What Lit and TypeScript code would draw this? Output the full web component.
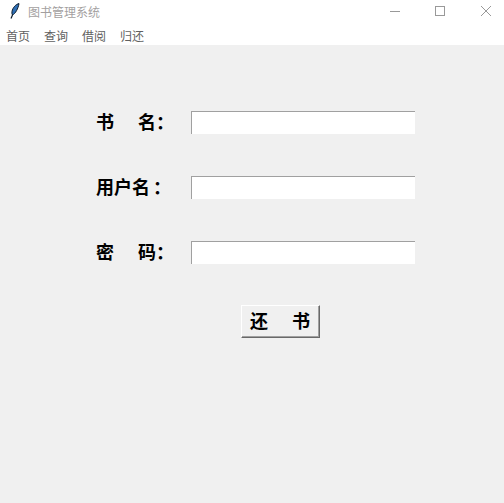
import { LitElement, html, css } from "lit";
import { customElement } from "lit/decorators.js";

@customElement("app-root")
export class AppRoot extends LitElement {
  static styles = css`
    :host { display: flex; flex-direction: column; width: 504px; height: 503px; background: #f0f0f0; overflow: hidden;
      font-family: "Noto Sans CJK SC", sans-serif; }
    .titlebar { height: 23px; background: #fff; display: flex; align-items: flex-start; padding-right: 12px; }
    .logo { width: 10px; height: 16px; margin: 3px 0 0 10px; flex: none; }
    .title { margin-left: 8px; font-size: 12px; line-height: 23px; color: #a39f9f; flex: 1; }
    .win { width: 12px; height: 12px; margin: 5px 0 0 33px; flex: none; display: block; }
    .win.close { margin-left: 34px; }
    .menu { height: 22px; background: #fff; display: flex; gap: 14px; padding-left: 6px; align-items: flex-end;
      font-size: 12px; color: #5f5f5f; line-height: 18px; }
    .form { display: flex; flex-direction: column; gap: 42px; padding: 66px 0 0 96px; }
    .row { display: flex; align-items: center; height: 23px; }
    .label { width: 95px; display: flex; font-size: 18px; font-weight: 700; color: #000; line-height: 22px; padding-bottom: 3px; }
    .label.spaced { gap: 24px; }
    .label.tight .colon { margin-left: 3px; }
    .label.spaced .colon { margin-left: -24px; }
    input { width: 224px; height: 23px; box-sizing: border-box; margin: 0; padding: 0; background: #fff; outline: none;
      border: none; border-left: 1px solid #a0a0a0; border-top: 1px solid #a0a0a0; }
    .actions { padding: 41px 0 0 241px; }
    button { width: 79px; height: 33px; box-sizing: border-box; padding: 0 0 4px 8px; margin: 0; background: #f0f0f0;
      border: 1px solid; border-color: #fff #696969 #696969 #fff;
      box-shadow: inset -1px -1px 0 #a0a0a0;
      font: 700 18px/1 "Noto Sans CJK SC", sans-serif; color: #000;
      display: flex; align-items: center; gap: 24px; }
  `;

  private row(chars: string[], spaced: boolean) {
    return html`<div class="row">
      <div class="label ${spaced ? "spaced" : "tight"}">${chars.map((c) => html`<span>${c}</span>`)}<span class="colon">：</span></div>
      <input type="text" />
    </div>`;
  }

  render() {
    return html`
      <div class="titlebar">
        <svg class="logo" viewBox="0 0 10 16">
          <path d="M9 0.6C6 1.2 2.8 4.4 2 8.4 1.7 10 1.9 11.2 2.5 12 5.4 10.6 8.2 5.6 9 0.6Z" fill="#2f6fb5" stroke="#0a1a2a" stroke-width="1"/>
          <path d="M2.5 12 1 15.5" stroke="#0a1a2a" stroke-width="1.2" fill="none"/>
        </svg>
        <span class="title">图书管理系统</span>
        <svg class="win" viewBox="0 0 12 12"><path d="M1 6.5H11" stroke="#999" fill="none"/></svg>
        <svg class="win" viewBox="0 0 12 12"><rect x="1.5" y="1.5" width="9" height="9" stroke="#999" fill="none"/></svg>
        <svg class="win close" viewBox="0 0 12 12"><path d="M1 1 11 11M11 1 1 11" stroke="#999" fill="none"/></svg>
      </div>
      <div class="menu"><span>首页</span><span>查询</span><span>借阅</span><span>归还</span></div>
      <div class="form">
        ${this.row(["书", "名"], true)}
        ${this.row(["用", "户", "名"], false)}
        ${this.row(["密", "码"], true)}
      </div>
      <div class="actions"><button><span>还</span><span>书</span></button></div>
    `;
  }
}
